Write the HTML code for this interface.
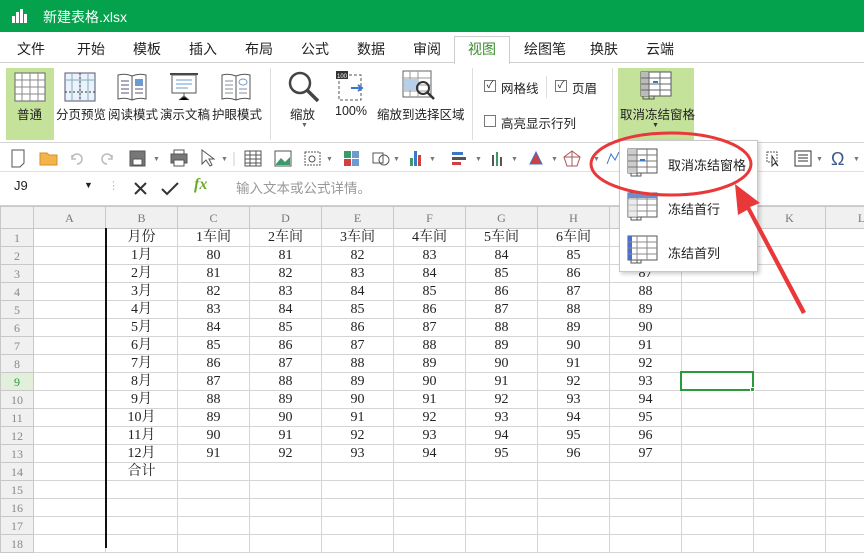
<!DOCTYPE html>
<html><head><meta charset="utf-8"><style>
*{box-sizing:border-box;margin:0;padding:0}
body{width:864px;height:546px;overflow:hidden;position:relative;background:#fff;font-family:"Liberation Sans","Noto Sans CJK SC",sans-serif;font-size:13px;color:#222}
.a{position:absolute}
#title{left:0;top:0;width:864px;height:32px;background:#05a24d;color:#fff}
.tab{top:36px;height:26px;line-height:26px;font-size:14px;color:#222}
.rb{font-size:12.5px;color:#222;top:104px}
table{position:absolute;left:0;top:206px;width:897px;border-collapse:collapse;table-layout:fixed;font-family:"Liberation Serif","Noto Serif CJK SC",serif;font-size:14px}
td{border:1px solid #d4d4d4;height:18px;text-align:center;padding:0;line-height:16px;overflow:hidden;white-space:nowrap}
tr.h td{background:#f0f0f0;color:#777;font-size:12px;height:22px;border-color:#c8c8c8}
td.rh{background:#f0f0f0;color:#888;font-size:12px;border-color:#c8c8c8}
.mi{left:668px;font-size:13px;color:#222}
</style></head><body>
<div id="title" class="a">
 <svg class="a" style="left:11px;top:8px" width="18" height="16"><rect x="1" y="8" width="3" height="7" fill="#fff"/><rect x="5" y="4" width="3" height="11" fill="#fff"/><rect x="9" y="1" width="3" height="14" fill="#fff"/><rect x="13" y="6" width="3" height="9" fill="#fff"/></svg>
 <div class="a" style="left:43px;top:7px;font-size:14px">新建表格.xlsx</div>
</div>
<div class="a" style="left:0;top:62px;width:864px;height:1px;background:#d0d0d0"></div>
<div class="a tab" style="left:17px">文件</div>
<div class="a tab" style="left:77px">开始</div>
<div class="a tab" style="left:133px">模板</div>
<div class="a tab" style="left:189px">插入</div>
<div class="a tab" style="left:245px">布局</div>
<div class="a tab" style="left:301px">公式</div>
<div class="a tab" style="left:357px">数据</div>
<div class="a tab" style="left:413px">审阅</div>
<div class="a" style="left:454px;top:36px;width:56px;height:28px;background:#fff;border:1px solid #ccc;border-bottom:none"></div>
<div class="a tab" style="left:468px;color:#3a8a2a">视图</div>
<div class="a tab" style="left:524px">绘图笔</div>
<div class="a tab" style="left:590px">换肤</div>
<div class="a tab" style="left:646px">云端</div>
<div class="a" style="left:6px;top:68px;width:48px;height:72px;background:#c5e29a"></div>
<svg class="a" style="left:14px;top:72px" width="32" height="30"><rect x="1" y="1" width="30" height="28" fill="#fff" stroke="#666"/><path d="M1 8H31M1 15H31M1 22H31M8 1V29M16 1V29M24 1V29" stroke="#888"/></svg>
<svg class="a" style="left:64px;top:72px" width="32" height="30"><rect x="1" y="1" width="30" height="28" fill="#eaf2fb" stroke="#557"/><path d="M1 8H31M8 1V29M16 1V29M24 1V29" stroke="#8ab"/><path d="M1 20H31M16 1V29" stroke="#333" stroke-dasharray="2 2"/></svg>
<svg class="a" style="left:116px;top:72px" width="32" height="30"><path d="M2 3Q9 1 16 4Q23 1 30 3V27Q23 25 16 28Q9 25 2 27Z" fill="#fff" stroke="#555"/><path d="M16 4V28" stroke="#555"/><path d="M5 9H13M5 13H13M5 17H13M5 21H13M19 17H27M19 21H27" stroke="#557"/><rect x="19" y="7" width="8" height="7" fill="#6b9bd1"/></svg>
<svg class="a" style="left:168px;top:72px" width="32" height="30"><path d="M2 2H30" stroke="#444" stroke-width="2"/><rect x="4" y="3" width="24" height="18" fill="#fff" stroke="#555"/><path d="M8 8H24M8 12H24M8 16H20" stroke="#6b9bd1"/><path d="M16 21V26M11 28L16 24L21 28" stroke="#555"/></svg>
<svg class="a" style="left:220px;top:72px" width="32" height="30"><path d="M2 3Q9 1 16 4Q23 1 30 3V27Q23 25 16 28Q9 25 2 27Z" fill="#fff" stroke="#555"/><path d="M16 4V28" stroke="#555"/><path d="M5 9H13M5 13H13M5 17H13M5 21H13M19 17H27M19 21H27" stroke="#889"/><ellipse cx="23" cy="10" rx="4" ry="3" fill="none" stroke="#6b9bd1"/></svg>
<div class="a rb" style="left:17px">普通</div>
<div class="a rb" style="left:56px">分页预览</div>
<div class="a rb" style="left:108px">阅读模式</div>
<div class="a rb" style="left:160px">演示文稿</div>
<div class="a rb" style="left:212px">护眼模式</div>
<div class="a" style="left:270px;top:68px;width:1px;height:72px;background:#ddd"></div>
<svg class="a" style="left:287px;top:70px" width="34" height="32"><circle cx="13" cy="13" r="10" fill="none" stroke="#444" stroke-width="2.5"/><path d="M20 20L31 31" stroke="#444" stroke-width="3.5"/></svg>
<div class="a rb" style="left:290px">缩放</div>
<div class="a" style="left:301px;top:122px;font-size:7px;color:#666">▼</div>
<svg class="a" style="left:335px;top:70px" width="32" height="32"><rect x="4" y="5" width="22" height="25" fill="#fff" stroke="#555" stroke-dasharray="3 2"/><rect x="1" y="1" width="12" height="8" fill="#333"/><text x="2" y="8" font-size="6" fill="#fff" font-family="Liberation Sans">100</text><path d="M16 18H26M23 15L27 18L23 21" stroke="#3c78c8" stroke-width="2" fill="none"/></svg>
<div class="a rb" style="left:335px">100%</div>
<svg class="a" style="left:402px;top:70px" width="34" height="32"><rect x="1" y="1" width="28" height="26" fill="#fff" stroke="#666"/><path d="M1 8H29M1 15H29M1 21H29M8 1V27M16 1V27" stroke="#999"/><rect x="2" y="9" width="13" height="11" fill="#b8cfe8"/><circle cx="21" cy="18" r="6" fill="none" stroke="#333" stroke-width="2"/><path d="M25 22L32 29" stroke="#333" stroke-width="2.5"/></svg>
<div class="a rb" style="left:377px">缩放到选择区域</div>
<div class="a" style="left:472px;top:68px;width:1px;height:72px;background:#ddd"></div>
<div class="a" style="left:484px;top:80px;width:12px;height:12px;border:1px solid #777;font-size:10px;line-height:10px;text-align:center">✓</div>
<div class="a" style="left:501px;top:78px;font-size:12.5px">网格线</div>
<div class="a" style="left:546px;top:76px;width:1px;height:22px;background:#ddd"></div>
<div class="a" style="left:555px;top:80px;width:12px;height:12px;border:1px solid #777;font-size:10px;line-height:10px;text-align:center">✓</div>
<div class="a" style="left:572px;top:78px;font-size:12.5px">页眉</div>
<div class="a" style="left:484px;top:115px;width:12px;height:12px;border:1px solid #777"></div>
<div class="a" style="left:501px;top:113px;font-size:12.5px">高亮显示行列</div>
<div class="a" style="left:612px;top:68px;width:1px;height:72px;background:#ddd"></div>
<div class="a" style="left:618px;top:68px;width:76px;height:72px;background:#c5e29a"></div>
<svg class="a" style="left:640px;top:71px" width="32" height="30"><rect x="1" y="1" width="30" height="24" fill="#fff" stroke="#555"/><rect x="1" y="1" width="8" height="24" fill="#bbb"/><path d="M1 7H31M1 13H31M1 19H31M9 1V25M20 1V25" stroke="#666"/><rect x="13" y="10" width="5" height="2" fill="#3c78c8"/><path d="M3 25V28H9V25M9 28H14V25" stroke="#555" fill="none"/></svg>
<div class="a" style="left:620px;top:104px;font-size:12.5px">取消冻结窗格</div>
<div class="a" style="left:652px;top:122px;font-size:7px;color:#333">▼</div>
<div class="a" style="left:0;top:142px;width:864px;height:1px;background:#d6d6d6"></div>
<svg class="a" style="left:0;top:144px" width="620" height="28">
<g fill="none" stroke="#555">
<path d="M12 6H24V19L20 23H12Z" fill="#fff"/>
<path d="M40 9H47L49 11H57V21H40Z" fill="#f3b54a" stroke="#d4902a"/>
<path d="M72 15A5 5 0 1 1 77 20M72 11V15H76" stroke="#bbb" stroke-width="1.5"/>
<path d="M112 15A5 5 0 1 0 107 20M112 11V15H108" stroke="#bbb" stroke-width="1.5"/>
<rect x="130" y="7" width="15" height="15" fill="#777"/><rect x="133" y="15" width="9" height="6" fill="#fff"/>
<rect x="171" y="10" width="16" height="9" fill="#777"/><rect x="174" y="6" width="10" height="4" fill="#fff"/><rect x="174" y="16" width="10" height="6" fill="#fff"/>
<path d="M202 6L202 20L206 16L210 22L212 21L209 15H214Z" fill="#fff"/>
<rect x="245" y="7" width="16" height="15" fill="#fff"/><path d="M245 11H261M245 15H261M245 19H261M250 7V22M256 7V22"/>
<rect x="275" y="7" width="16" height="15" fill="#fff"/><path d="M276 20L281 14L285 18L290 13V21H276Z" fill="#3a9a6a" stroke="none"/>
<rect x="305" y="8" width="15" height="13" stroke-dasharray="2 1"/><circle cx="312" cy="15" r="3"/>
<rect x="344" y="7" width="7" height="7" fill="#3a9a6a" stroke="none"/><rect x="352" y="7" width="7" height="7" fill="#6b9bd1" stroke="none"/><rect x="344" y="15" width="7" height="7" fill="#d04040" stroke="none"/><rect x="352" y="15" width="7" height="7" fill="#6b9bd1" stroke="none"/>
<rect x="373" y="9" width="10" height="10"/><circle cx="384" cy="16" r="5"/>
<rect x="410" y="14" width="3" height="8" fill="#3a9a6a" stroke="none"/><rect x="414" y="7" width="3" height="15" fill="#3c78c8" stroke="none"/><rect x="418" y="11" width="3" height="11" fill="#d04040" stroke="none"/>
<rect x="452" y="8" width="11" height="3" fill="#3c78c8" stroke="none"/><rect x="452" y="13" width="14" height="3" fill="#555" stroke="none"/><rect x="452" y="18" width="9" height="3" fill="#d04040" stroke="none"/>
<rect x="492" y="11" width="2" height="11" fill="#555" stroke="none"/><rect x="496" y="8" width="2" height="14" fill="#3a9a6a" stroke="none"/><rect x="500" y="13" width="2" height="9" fill="#555" stroke="none"/>
<path d="M530 20L536 8L542 20Z" fill="#d04040" stroke="#3c78c8"/>
<path d="M572 7L580 13L577 22H567L564 13Z M572 7V22M564 13L580 13" stroke="#a55"/>
<path d="M607 20L611 10L615 16L619 8" stroke="#3c78c8"/>
</g>
<g fill="#777" font-size="7" font-family="Liberation Sans"><text x="153" y="17">▼</text><text x="221" y="17">▼</text><text x="326" y="17">▼</text><text x="393" y="17">▼</text><text x="429" y="17">▼</text><text x="475" y="17">▼</text><text x="511" y="17">▼</text><text x="551" y="17">▼</text><text x="593" y="17">▼</text></g>
<path d="M234 8V22" stroke="#ccc"/>
</svg>
<svg class="a" style="left:760px;top:144px" width="104" height="28"><rect x="7" y="8" width="10" height="10" fill="none" stroke="#555" stroke-dasharray="2 1"/><path d="M12 12L12 22L15 19L18 22Z" fill="#fff" stroke="#333"/><rect x="35" y="7" width="16" height="15" fill="#fff" stroke="#333"/><path d="M38 11H48M38 14H48M38 17H48" stroke="#333"/><text x="56" y="17" font-size="7" fill="#777">▼</text><text x="71" y="21" font-size="18" fill="#3c5a8a" font-family="Liberation Sans">Ω</text><text x="93" y="17" font-size="7" fill="#777">▼</text></svg>
<div class="a" style="left:0;top:171px;width:864px;height:1px;background:#e0e0e0"></div>
<div class="a" style="left:14px;top:178px;font-size:13px">J9</div>
<div class="a" style="left:84px;top:180px;font-size:9px">▼</div>
<div class="a" style="left:108px;top:179px;color:#bbb;font-size:11px">⋮</div>
<svg class="a" style="left:132px;top:180px" width="60" height="18"><path d="M3 3L14 14M14 3L3 14" stroke="#333" stroke-width="2"/><path d="M30 9L35 14L46 3" stroke="#333" stroke-width="2" fill="none"/></svg>
<div class="a" style="left:194px;top:176px;font-size:16px;color:#6aaa2a;font-style:italic;font-weight:bold;font-family:'Liberation Serif',serif">fx</div>
<div class="a" style="left:236px;top:177px;font-size:13.5px;color:#999">输入文本或公式详情。</div>
<div class="a" style="left:0;top:205px;width:864px;height:1px;background:#d0d0d0"></div>
<table>
<colgroup><col style="width:33px"><col style="width:72px"><col style="width:72px"><col style="width:72px"><col style="width:72px"><col style="width:72px"><col style="width:72px"><col style="width:72px"><col style="width:72px"><col style="width:72px"><col style="width:72px"><col style="width:72px"><col style="width:72px"></colgroup>
<tr class="h"><td></td><td>A</td><td>B</td><td>C</td><td>D</td><td>E</td><td>F</td><td>G</td><td>H</td><td>I</td><td>J</td><td>K</td><td>L</td></tr>
<tr><td class="rh">1</td><td></td><td>月份</td><td>1车间</td><td>2车间</td><td>3车间</td><td>4车间</td><td>5车间</td><td>6车间</td><td>7车间</td><td></td><td></td><td></td></tr>
<tr><td class="rh">2</td><td></td><td>1月</td><td>80</td><td>81</td><td>82</td><td>83</td><td>84</td><td>85</td><td>86</td><td></td><td></td><td></td></tr>
<tr><td class="rh">3</td><td></td><td>2月</td><td>81</td><td>82</td><td>83</td><td>84</td><td>85</td><td>86</td><td>87</td><td></td><td></td><td></td></tr>
<tr><td class="rh">4</td><td></td><td>3月</td><td>82</td><td>83</td><td>84</td><td>85</td><td>86</td><td>87</td><td>88</td><td></td><td></td><td></td></tr>
<tr><td class="rh">5</td><td></td><td>4月</td><td>83</td><td>84</td><td>85</td><td>86</td><td>87</td><td>88</td><td>89</td><td></td><td></td><td></td></tr>
<tr><td class="rh">6</td><td></td><td>5月</td><td>84</td><td>85</td><td>86</td><td>87</td><td>88</td><td>89</td><td>90</td><td></td><td></td><td></td></tr>
<tr><td class="rh">7</td><td></td><td>6月</td><td>85</td><td>86</td><td>87</td><td>88</td><td>89</td><td>90</td><td>91</td><td></td><td></td><td></td></tr>
<tr><td class="rh">8</td><td></td><td>7月</td><td>86</td><td>87</td><td>88</td><td>89</td><td>90</td><td>91</td><td>92</td><td></td><td></td><td></td></tr>
<tr><td class="rh" style="color:#2a9a3a;background:#e2efda">9</td><td></td><td>8月</td><td>87</td><td>88</td><td>89</td><td>90</td><td>91</td><td>92</td><td>93</td><td></td><td></td><td></td></tr>
<tr><td class="rh">10</td><td></td><td>9月</td><td>88</td><td>89</td><td>90</td><td>91</td><td>92</td><td>93</td><td>94</td><td></td><td></td><td></td></tr>
<tr><td class="rh">11</td><td></td><td>10月</td><td>89</td><td>90</td><td>91</td><td>92</td><td>93</td><td>94</td><td>95</td><td></td><td></td><td></td></tr>
<tr><td class="rh">12</td><td></td><td>11月</td><td>90</td><td>91</td><td>92</td><td>93</td><td>94</td><td>95</td><td>96</td><td></td><td></td><td></td></tr>
<tr><td class="rh">13</td><td></td><td>12月</td><td>91</td><td>92</td><td>93</td><td>94</td><td>95</td><td>96</td><td>97</td><td></td><td></td><td></td></tr>
<tr><td class="rh">14</td><td></td><td>合计</td><td></td><td></td><td></td><td></td><td></td><td></td><td></td><td></td><td></td><td></td></tr>
<tr><td class="rh">15</td><td></td><td></td><td></td><td></td><td></td><td></td><td></td><td></td><td></td><td></td><td></td><td></td></tr>
<tr><td class="rh">16</td><td></td><td></td><td></td><td></td><td></td><td></td><td></td><td></td><td></td><td></td><td></td><td></td></tr>
<tr><td class="rh">17</td><td></td><td></td><td></td><td></td><td></td><td></td><td></td><td></td><td></td><td></td><td></td><td></td></tr>
<tr><td class="rh">18</td><td></td><td></td><td></td><td></td><td></td><td></td><td></td><td></td><td></td><td></td><td></td><td></td></tr>
</table>
<div class="a" style="left:105px;top:228px;width:1.5px;height:320px;background:#111"></div>
<div class="a" style="left:680px;top:371px;width:74px;height:20px;border:2px solid #2a9a3a"></div>
<div class="a" style="left:750px;top:387px;width:5px;height:5px;background:#2a9a3a;border:1px solid #fff"></div>
<div class="a" style="left:619px;top:140px;width:139px;height:132px;background:#fff;border:1px solid #c8c8c8;box-shadow:2px 2px 4px rgba(0,0,0,.2)"></div>
<svg class="a" style="left:627px;top:148px" width="32" height="120">
<g><rect x="1" y="1" width="29" height="24" fill="#fff" stroke="#555"/><rect x="1" y="1" width="9" height="24" fill="#ccc"/><path d="M1 7H30M1 13H30M1 19H30M10 1V25M20 1V25" stroke="#777"/><rect x="13" y="11" width="5" height="2" fill="#3c78c8"/><path d="M4 25V28H10V25M10 28H14V25" stroke="#555" fill="none"/></g>
<g transform="translate(0,44)"><rect x="1" y="1" width="29" height="24" fill="#fff" stroke="#555"/><rect x="1" y="1" width="29" height="5" fill="#6b8fd6"/><path d="M1 7H30M1 13H30M1 19H30M10 1V25M20 1V25" stroke="#888"/><rect x="1" y="7" width="9" height="18" fill="#ddd" opacity=".6"/><path d="M4 25V28H10V25M10 28H14V25" stroke="#555" fill="none"/></g>
<g transform="translate(0,87)"><rect x="1" y="1" width="29" height="24" fill="#fff" stroke="#555"/><rect x="1" y="1" width="4" height="24" fill="#4a6fd0"/><path d="M1 7H30M1 13H30M1 19H30M10 1V25M20 1V25" stroke="#888"/><path d="M4 25V28H10V25M10 28H14V25" stroke="#555" fill="none"/></g>
</svg>
<div class="a mi" style="top:155px">取消冻结窗格</div>
<div class="a mi" style="top:199px">冻结首行</div>
<div class="a mi" style="top:243px">冻结首列</div>
<svg class="a" style="left:0;top:0" width="864" height="546">
<ellipse cx="671" cy="164" rx="80" ry="31" fill="none" stroke="#e8383a" stroke-width="3"/>
<path d="M806 312L750 207L760 203L735 184L738 215L747 210L802 314Z" fill="#e8383a"/>
</svg>
</body></html>
